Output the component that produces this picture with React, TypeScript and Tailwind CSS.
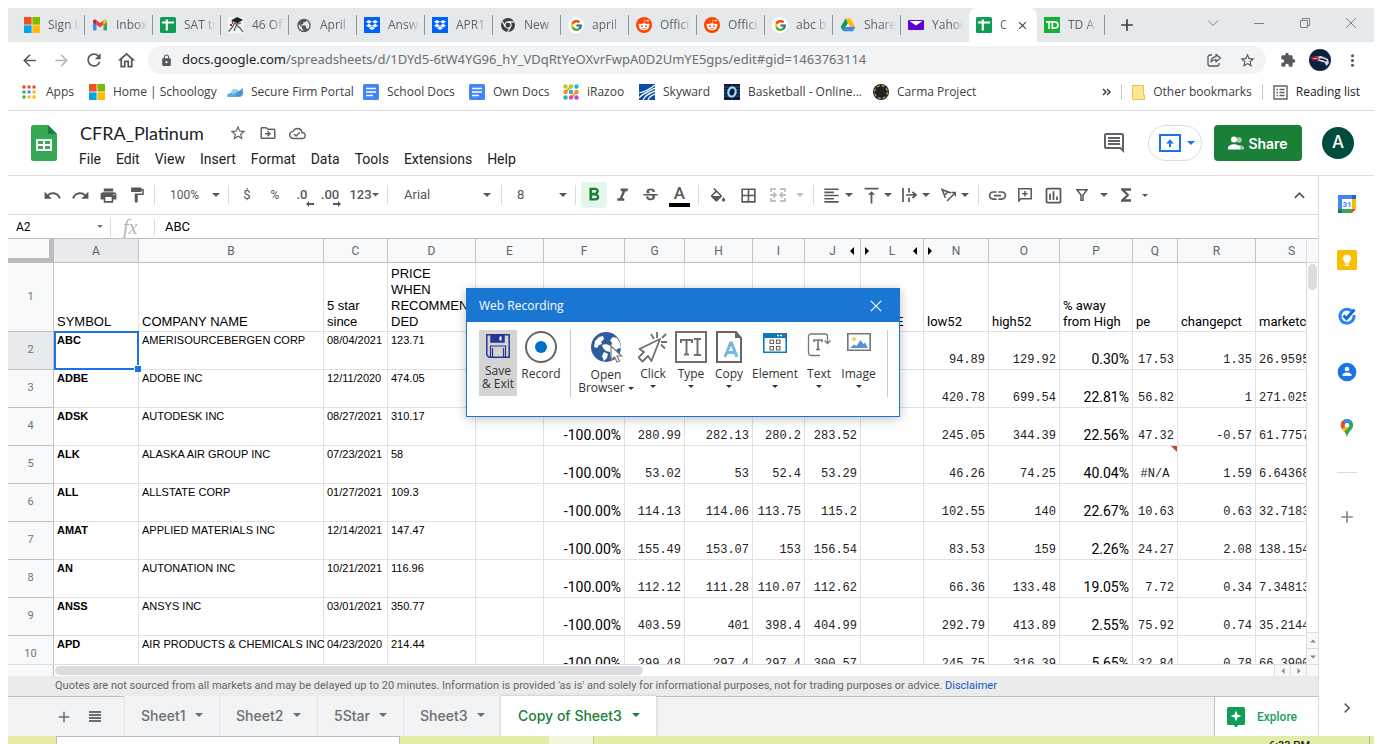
import type { ReactNode } from 'react';
import { FcGoogle } from 'react-icons/fc';
import { FaRedditAlien, FaDropbox } from 'react-icons/fa';
import {
  MdAdd, MdArrowBack, MdArrowForward, MdBorderAll, MdClose, MdExtension, MdFormatAlignLeft,
  MdFormatBold, MdFormatItalic, MdFormatPaint, MdFunctions, MdInsertLink,
  MdKeyboardArrowRight, MdKeyboardArrowUp, MdLock, MdMoreVert, MdOutlineCloudDone,
  MdOutlineDriveFileMove, MdOutlineHome, MdOutlineInsertChart, MdPrint, MdRedo, MdRefresh,
  MdOutlineComment, MdStarBorder, MdStrikethroughS, MdUndo, MdVerticalAlignTop, MdPublic,
} from 'react-icons/md';

const UI = "font-['Open_Sans','Noto_Sans',sans-serif]";

function Caret({ className = 'w-2' }: { className?: string }) {
  return (
    <svg viewBox="0 0 8 4" className={`${className} shrink-0 fill-current`} aria-hidden="true">
      <path d="M0 0h8L4 4z" />
    </svg>
  );
}

/* ---------- site icons ---------- */

function Microsoft() {
  return (
    <svg viewBox="0 0 16 16" className="size-4">
      <path fill="#f25022" d="M0 0h7.6v7.6H0z" /><path fill="#7fba00" d="M8.4 0H16v7.6H8.4z" />
      <path fill="#00a4ef" d="M0 8.4h7.6V16H0z" /><path fill="#ffb900" d="M8.4 8.4H16V16H8.4z" />
    </svg>
  );
}
function Gmail() {
  return (
    <svg viewBox="0 0 16 16" className="size-4">
      <path fill="#4285f4" d="M1 4v8.5c0 .6.4 1 1 1h2.5V7z" />
      <path fill="#34a853" d="M15 4v8.5c0 .6-.4 1-1 1h-2.500V7z" />
      <path fill="#ea4335" d="M4.500 3.200 8 6l3.500-2.800v4.600L8 10.500 4.500 7.800z" />
      <path fill="#c5221f" d="M1 4.200C1 2.700 2.700 2 3.800 2.700l.7.5v4.600L1 5.300z" />
      <path fill="#fbbc04" d="M15 4.200c0-1.500-1.700-2.200-2.800-1.500l-.7.500v4.600L15 5.300z" />
    </svg>
  );
}
function SheetsSquare() {
  return (
    <svg viewBox="0 0 16 16" className="size-4">
      <rect width="16" height="16" rx="1.500" fill="#0f9d58" />
      <path fill="#fff" d="M2 4.500h3.700V2.500h2.200v2H14v2H7.900V13.500H5.700v-7H2z" />
    </svg>
  );
}
function Graduate() {
  return (
    <svg viewBox="0 0 16 16" className="size-4">
      <rect width="16" height="16" fill="#f5f5f5" />
      <path fill="#222" d="m3 3.500 6-3.500 6 2.800-5.500 3.700z" />
      <path d="M4.500 4v3M6 6c2 1.500 4 1.500 7 0M6 7c-1 3-3 5-5.500 7.500M8 8l4 3 3 4M8 9l-2 5" stroke="#555" strokeWidth="1.200" fill="none" />
      <path d="M2 8h2" stroke="#b71c3c" strokeWidth="2" />
    </svg>
  );
}
function Dropbox() {
  return <span className="flex size-4 items-center justify-center bg-[#0061fe] text-white"><FaDropbox size={12} /></span>;
}
function ChromeGray() {
  return (
    <svg viewBox="0 0 16 16" className="size-4">
      <circle cx="8" cy="8" r="7" fill="#3c4043" />
      <circle cx="8" cy="8" r="3.100" fill="none" stroke="#fff" strokeWidth="1.100" />
      <path d="M8 4.900h6.200M5.300 9.600 2.200 4.300M10.700 9.600l-3 5.300" stroke="#fff" strokeWidth="1.100" />
    </svg>
  );
}
function Google() {
  return <span className="flex size-4 items-center justify-center rounded-full bg-white"><FcGoogle size={13} /></span>;
}
function Reddit() {
  return <span className="flex size-4 items-center justify-center rounded-full bg-[#ff4500] text-white"><FaRedditAlien size={12} /></span>;
}
function Drive() {
  return (
    <svg viewBox="0 0 16 16" className="size-4">
      <path fill="#0f9d58" d="M5.500 1.500 8 5.800 3.200 14.300.6 10z" />
      <path fill="#ffba00" d="M5.500 1.500h5L15.400 10h-5z" />
      <path fill="#4285f4" d="M5.700 10h9.700l-2.500 4.300H3.200z" />
    </svg>
  );
}
function Yahoo() {
  return (
    <svg viewBox="0 0 16 16" className="size-4">
      <rect y="3" width="16" height="10" rx="1" fill="#6001d2" />
      <path d="M1.500 4h13L8 8.500z" fill="#fff" />
    </svg>
  );
}
function TD() {
  return (
    <svg viewBox="0 0 16 16" className="size-4">
      <rect width="16" height="16" fill="#14b135" />
      <path d="M2 4.800h6M5 4.800v7.200M8.300 4.800H10c2.500 0 4 1.200 4 3.200s-1.500 3.200-4 3.200H8.300z" stroke="#fff" strokeWidth="1.700" fill="none" />
    </svg>
  );
}
function AppsGrid() {
  const c = ['#ea4335', '#ea4335', '#ea4335', '#34a853', '#4285f4', '#fbbc04', '#34a853', '#fbbc04', '#fbbc04'];
  return (
    <svg viewBox="0 0 14 14" className="size-3.5">
      {c.map((f, i) => <rect key={i} x={(i % 3) * 5 + 0.5} y={Math.floor(i / 3) * 5 + 0.5} width="3" height="3" fill={f} />)}
    </svg>
  );
}
function CloudBlue() {
  return (
    <svg viewBox="0 0 16 16" className="size-4">
      <path fill="#5aa9e0" d="M0 12c0-2 2-3 4-3 0-2 2-4 4-4 1.500 0 3 .8 3.500 2L16 4v6c0 2-2 3-4 3H2c-1 0-2 0-2-1z" />
      <path fill="#9fd0f2" d="M4 9c0-2 2-4 4-4 1.500 0 3 .8 3.500 2L6 10z" />
      <path d="m9 12 5-5m-2 5 4-4" stroke="#1e6fb4" strokeWidth="1" />
    </svg>
  );
}
function DocsBlue() {
  return (
    <svg viewBox="0 0 16 16" className="size-4">
      <rect width="16" height="16" rx="1.500" fill="#4285f4" />
      <path d="M3 4.500h10M3 8h10M3 11.500h7" stroke="#fff" strokeWidth="1.600" />
    </svg>
  );
}
function Razoo() {
  return (
    <svg viewBox="0 0 16 16" className="size-4">
      <path d="M2.500 8 8 2.500M8 13.500l5.500-5.500" stroke="#ff9b21" strokeWidth="2" />
      <g fill="#1fb5d6"><circle cx="13.500" cy="2.500" r="2.200" /><circle cx="8" cy="8" r="2.300" /><circle cx="2.500" cy="13.500" r="2.200" /></g>
      <g fill="#a8cf38"><circle cx="2.500" cy="2.500" r="2.200" /><circle cx="8" cy="2.500" r="2.200" /></g>
      <g fill="#ff8a1f"><circle cx="2.500" cy="8" r="2.200" /><circle cx="13.500" cy="8" r="2.200" /></g>
      <circle cx="8" cy="13.500" r="2.200" fill="#e8489a" /><circle cx="13.500" cy="13.500" r="2.200" fill="#b04fc7" />
    </svg>
  );
}
function Skyward() {
  return (
    <svg viewBox="0 0 16 16" className="size-4">
      <rect width="16" height="16" fill="#0b4ea2" />
      <path d="M0 9C5 8 11 5 16 1M0 14C4 9 11 7 16 4M4 16c2-5 7-7 12-9M9 16c1-3 4-5 7-6" stroke="#fff" strokeWidth="1.200" fill="none" />
    </svg>
  );
}
function Basketball() {
  return (
    <svg viewBox="0 0 16 16" className="size-4">
      <rect width="16" height="16" fill="#0b1d3a" />
      <path d="M0 3h16M0 6h16M0 9h16M0 12h16" stroke="#2b6f9e" strokeWidth=".8" />
      <ellipse cx="8" cy="8" rx="3.600" ry="4.600" transform="rotate(15 8 8)" fill="#0b1d3a" stroke="#9edcf5" strokeWidth="2.200" />
    </svg>
  );
}
function Carma() {
  return (
    <svg viewBox="0 0 16 16" className="size-4">
      <circle cx="8" cy="8" r="8" fill="#222" />
      <circle cx="8" cy="8" r="6.400" fill="none" stroke="#c9a24a" strokeWidth="1.200" strokeDasharray="3 2" />
    </svg>
  );
}

const tabs: { title: string; icon: ReactNode }[] = [
  { title: 'Sign in', icon: <Microsoft /> },
  { title: 'Inbox', icon: <Gmail /> },
  { title: 'SAT tu', icon: <SheetsSquare /> },
  { title: '46 Off', icon: <Graduate /> },
  { title: 'April', icon: <MdPublic size={17} className="text-[#55585c]" /> },
  { title: 'Answ', icon: <Dropbox /> },
  { title: 'APR1', icon: <Dropbox /> },
  { title: 'New', icon: <ChromeGray /> },
  { title: 'april', icon: <Google /> },
  { title: 'Offici', icon: <Reddit /> },
  { title: 'Offici', icon: <Reddit /> },
  { title: 'abc b', icon: <Google /> },
  { title: 'Share', icon: <Drive /> },
  { title: 'Yahoo', icon: <Yahoo /> },
];

function TabStrip() {
  const fade = 'overflow-hidden whitespace-nowrap [mask-image:linear-gradient(to_right,black_60%,transparent)]';
  return (
    <div className="flex h-[34px] items-center bg-[#e6e9ec] pl-[9px] text-[12px] text-[#5f6368]">
      {tabs.map((t, i) => (
        <a key={i} href="#" className={`flex h-5 w-[68px] shrink-0 items-center gap-2 pl-[7px] ${i < 13 ? 'border-r border-[#8f9296]' : ''}`}>
          <span className="flex w-4 shrink-0 justify-center">{t.icon}</span>
          <span className={`w-[32px] ${fade}`}>{t.title}</span>
        </a>
      ))}
      <div className="flex h-full w-[68px] shrink-0 items-center gap-2 rounded-t-lg bg-white pl-[7px]">
        <SheetsSquare />
        <span className={`w-2 ${fade}`}>C</span>
        <button aria-label="Close tab"><MdClose size={13} className="text-[#3c4043]" /></button>
      </div>
      <a href="#" className="flex h-5 w-[68px] shrink-0 items-center gap-2 border-r border-[#8f9296] pl-[7px]">
        <TD />
        <span className={`w-[30px] ${fade}`}>TD A</span>
      </a>
      <button aria-label="New tab" className="ml-3"><MdAdd size={20} className="text-[#3c4043]" /></button>
      <div className="ml-auto flex h-full items-center gap-[30px] pr-[17px] text-[#7d8185]">
        <button aria-label="Search tabs" className="pb-1">
          <svg viewBox="0 0 12 12" className="w-3" fill="none" stroke="currentColor"><path d="m1 3.500 5 5 5-5" /></svg>
        </button>
        <button aria-label="Minimize" className="pb-1 pl-1">
          <svg viewBox="0 0 12 12" className="w-3" fill="none" stroke="currentColor"><path d="M1 6.500h10" /></svg>
        </button>
        <button aria-label="Restore" className="pb-1 pl-1">
          <svg viewBox="0 0 12 12" className="w-3" fill="none" stroke="currentColor"><path d="M1.500 3.500h7v7h-7zM3.500 3V1.500h7v7H9" /></svg>
        </button>
        <button aria-label="Close" className="pb-1 pl-1">
          <svg viewBox="0 0 12 12" className="w-3" fill="none" stroke="currentColor"><path d="m1 1 10 10M11 1 1 11" /></svg>
        </button>
      </div>
    </div>
  );
}

function AddressBar() {
  return (
    <div className="flex h-9 items-center pr-3 pl-3 text-[#55585c]">
      <button aria-label="Back" className="flex w-8"><MdArrowBack size={19} /></button>
      <button aria-label="Forward" className="flex w-8 text-[#b4b7ba]"><MdArrowForward size={19} /></button>
      <button aria-label="Reload" className="flex w-8"><MdRefresh size={20} /></button>
      <button aria-label="Home" className="flex w-8"><MdOutlineHome size={21} /></button>
      <div className="flex h-7 grow items-center rounded-full bg-[#f1f3f4] pr-2.5 pl-3 font-['Noto_Sans',sans-serif] text-[13px]">
        <MdLock size={13} className="mr-[9px] shrink-0" />
        <label htmlFor="url" className="text-[#202124]">docs.google.com</label>
        <input id="url" className="min-w-0 grow bg-transparent text-[#6b6e72] outline-none" defaultValue="/spreadsheets/d/1DYd5-6tW4YG96_hY_VDqRtYeOXvrFwpA0D2UmYE5gps/edit#gid=1463763114" />
        <button aria-label="Share this page" className="mr-[17px]">
          <svg viewBox="0 0 16 16" className="w-4" fill="none" stroke="currentColor" strokeWidth="1.300">
            <path d="M6 3H4a2 2 0 0 0-2 2v7a2 2 0 0 0 2 2h7a2 2 0 0 0 2-2v-1" />
            <path d="M10 2.500 14.500 6 10 9.800V7.700c-2.500 0-4 .8-5 2.300.3-3 2-5 5-5.300z" strokeLinejoin="round" />
          </svg>
        </button>
        <button aria-label="Bookmark this page"><MdStarBorder size={17} /></button>
      </div>
      <button aria-label="Extensions" className="ml-[14px]"><MdExtension size={16} /></button>
      <button aria-label="Profile" className="ml-[13px]">
        <svg viewBox="0 0 22 22" className="w-[22px]">
          <circle cx="11" cy="11" r="11" fill="#0c2340" />
          <path d="M1 8.500 12 7l7 3 1 4-2.500 3-2-3.500-4-1z" fill="#d5d9de" />
          <path d="m1.500 8.800 8-.6M3.500 11l7-1" stroke="#c8102e" strokeWidth="1.600" />
          <path d="m11 10 3.500.5 3 1.500" stroke="#0c2340" strokeWidth="1.400" />
        </svg>
      </button>
      <button aria-label="Menu" className="ml-3"><MdMoreVert size={19} /></button>
    </div>
  );
}

const bookmarks: { label: string; icon: ReactNode; w: string }[] = [
  { label: 'Apps', icon: <AppsGrid />, w: 'w-[67px]' },
  { label: 'Home | Schoology', icon: <Microsoft />, w: 'w-[138px]' },
  { label: 'Secure Firm Portal', icon: <CloudBlue />, w: 'w-[136px]' },
  { label: 'School Docs', icon: <DocsBlue />, w: 'w-[106px]' },
  { label: 'Own Docs', icon: <DocsBlue />, w: 'w-[94px]' },
  { label: 'iRazoo', icon: <Razoo />, w: 'w-[76px]' },
  { label: 'Skyward', icon: <Skyward />, w: 'w-[85px]' },
  { label: 'Basketball - Online...', icon: <Basketball />, w: 'w-[149px]' },
  { label: 'Carma Project', icon: <Carma />, w: 'w-[110px]' },
];

function Bookmarks() {
  return (
    <nav className="flex h-[33px] items-center border-b border-[#dadce0] pr-3.5 pb-1 pl-3.5 text-[12px] whitespace-nowrap text-[#3c4043]">
      {bookmarks.map((b) => (
        <a key={b.label} href="#" className={`flex shrink-0 items-center gap-2 ${b.w}`}>
          <span className="flex w-4 shrink-0">{b.icon}</span>
          {b.label}
        </a>
      ))}
      <button aria-label="More bookmarks" className="ml-auto">
        <svg viewBox="0 0 9 8" className="w-[9px]" fill="none" stroke="currentColor" strokeWidth="1.500"><path d="m1 1 3 3-3 3M5 1l3 3-3 3" /></svg>
      </button>
      <span className="mx-2.5 h-4 w-px bg-[#c8cacd]" />
      <a href="#" className="flex items-center gap-2">
        <svg viewBox="0 0 13 15" className="w-[13px]"><path d="M.5.500h11v9.500h1v4.500H.500z" fill="#ffe694" stroke="#e8c547" /></svg>
        Other bookmarks
      </a>
      <span className="mx-2.5 h-4 w-px bg-[#c8cacd]" />
      <button className="flex items-center gap-2 text-[#202124]">
        <svg viewBox="0 0 15 15" className="w-[15px]" fill="none" stroke="#5f6368" strokeWidth="1.400">
          <path d="M1 1h13v13H1zM3.500 4.500H5M6.500 4.500h5M3.500 7.500H5M6.500 7.500h5M3.500 10.500H5M6.500 10.500h5" />
        </svg>
        Reading list
      </button>
    </nav>
  );
}

/* ---------- document header ---------- */

const menus = ['File', 'Edit', 'View', 'Insert', 'Format', 'Data', 'Tools', 'Extensions', 'Help'];

function DocHeader() {
  return (
    <header className="flex h-[65px] items-center border-b border-[#dadce0] pr-5 pl-[23px]">
      <svg viewBox="0 0 26 36" className="w-[26px]">
        <path d="M2.500 0H17l9 9v24.500a2.500 2.500 0 0 1-2.500 2.500h-21A2.500 2.500 0 0 1 0 33.500v-31A2.500 2.500 0 0 1 2.500 0z" fill="#34a853" />
        <path d="M17 0l9 9h-9z" fill="#188038" />
        <path d="M5 14h16v12H5zM7 16v3h5v-3zm7 0v3h5v-3zm-7 5v3h5v-3zm7 0v3h5v-3z" fill="#fff" fillRule="evenodd" />
      </svg>
      <div className="ml-[22px] pt-1">
        <div className="flex h-7 items-center text-[#5f6368]">
          <h1 className="w-[150px] pl-px font-['Lato',sans-serif] text-[18px] text-[#202124]">CFRA_Platinum</h1>
          <button aria-label="Star" className="w-[30px]"><MdStarBorder size={18} /></button>
          <button aria-label="Move" className="w-[30px]"><MdOutlineDriveFileMove size={18} /></button>
          <button aria-label="Document status"><MdOutlineCloudDone size={17} /></button>
        </div>
        <nav className="flex h-6 items-center gap-[15px] text-[14px] text-[#202124]">
          {menus.map((m) => <button key={m}>{m}</button>)}
        </nav>
      </div>
      <button aria-label="Comments" className="ml-auto text-[#5f6368]"><MdOutlineComment size={24} /></button>
      <button aria-label="Present" className="ml-[22px] flex h-9 w-[54px] items-center justify-center gap-1.5 rounded-full border border-[#dadce0] pl-1 text-[#1a73e8]">
        <svg viewBox="0 0 22 18" className="w-[22px]" fill="none" stroke="currentColor" strokeWidth="2">
          <path d="M1 1h20v16H1zM11 13V6.500" /><path d="m7 9.500 4-4.200 4 4.200z" fill="currentColor" stroke="none" />
        </svg>
        <Caret />
      </button>
      <button className="ml-3 flex h-9 w-[88px] items-center justify-center gap-1 rounded bg-[#1a8038] font-['Inter',sans-serif] text-[14px] font-semibold text-white">
        <svg viewBox="0 0 16 14" className="w-4" fill="#fff">
          <circle cx="11" cy="4" r="2.700" opacity=".6" /><path d="M10 9c3 0 6 1 6 3v1.500h-4z" opacity=".6" />
          <circle cx="6" cy="3.500" r="3" /><path d="M0 13.500V12c0-2.500 3.500-3.700 6-3.700S12 9.500 12 12v1.500z" />
        </svg>
        Share
      </button>
      <button className="ml-5 size-8 rounded-full bg-[#004d40] font-['Inter',sans-serif] text-[17px] font-medium text-white" aria-label="Account">A</button>
    </header>
  );
}

function Sep() {
  return <span className="flex w-[7px] shrink-0 justify-center"><span className="h-5 w-px bg-[#dadce0]" /></span>;
}
function Tool({ w, label, children }: { w: string; label: string; children: ReactNode }) {
  return <button aria-label={label} className={`flex h-7 shrink-0 items-center ${w}`}>{children}</button>;
}

function Toolbar() {
  return (
    <div className="flex h-[39px] shrink-0 items-center border-b border-[#dadce0] pl-[30px] text-[13px] text-[#55585c]">
      <Tool label="Undo" w="w-7 justify-center"><MdUndo size={19} /></Tool>
      <Tool label="Redo" w="w-7 justify-center"><MdRedo size={19} /></Tool>
      <Tool label="Print" w="w-7 justify-center"><MdPrint size={19} /></Tool>
      <Tool label="Paint format" w="w-[29px] justify-center"><MdFormatPaint size={18} /></Tool>
      <Sep />
      <div className="flex w-[67px] shrink-0 items-center pr-[5px] pl-3 text-[12px]">
        <select aria-label="Zoom" className="grow appearance-none bg-transparent"><option>100%</option></select>
        <Caret />
      </div>
      <Sep />
      <Tool label="Currency" w="w-[30px] justify-center">$</Tool>
      <Tool label="Percent" w="w-[26px] justify-center text-[12px]">%</Tool>
      <Tool label="Decrease decimal places" w="w-7 justify-center font-medium">
        <span className="relative">.0<svg viewBox="0 0 8 6" className="absolute -right-1.5 -bottom-0.5 w-2" fill="currentColor"><path d="M3 0v2h5v2H3v2L0 3z" /></svg></span>
      </Tool>
      <Tool label="Increase decimal places" w="w-7 justify-center font-medium">
        <span className="relative">.00<svg viewBox="0 0 8 6" className="absolute -right-0.5 -bottom-0.5 w-2" fill="currentColor"><path d="M5 0v2H0v2h5v2l3-3z" /></svg></span>
      </Tool>
      <Tool label="More formats" w="w-10 justify-center font-medium">123<Caret className="w-[7px]" /></Tool>
      <Sep />
      <div className="flex w-[107px] shrink-0 items-center pr-[7px] pl-[13px]">
        <select aria-label="Font" className="grow appearance-none bg-transparent"><option>Arial</option></select>
        <Caret />
      </div>
      <Sep />
      <div className="flex w-[67px] shrink-0 items-center pr-[5px] pl-3">
        <select aria-label="Font size" className="grow appearance-none bg-transparent"><option>8</option></select>
        <Caret />
      </div>
      <Sep />
      <Tool label="Bold" w="w-[30px] justify-center">
        <span className="flex size-[26px] items-center justify-center rounded-sm bg-[#e6f4ea] text-[#188038]"><MdFormatBold size={22} /></span>
      </Tool>
      <Tool label="Italic" w="w-[27px] justify-center"><MdFormatItalic size={21} /></Tool>
      <Tool label="Strikethrough" w="w-7 justify-center"><MdStrikethroughS size={19} /></Tool>
      <Tool label="Text color" w="w-[31px] justify-center">
        <span className="flex w-[21px] flex-col items-center border-b-4 border-black text-[17px] leading-5 font-medium">A</span>
      </Tool>
      <Sep />
      <Tool label="Fill color" w="w-8 justify-center">
        <svg viewBox="2 0 20 18" className="w-4" fill="currentColor">
          <path d="M16.560 8.940 7.620 0 6.210 1.410l2.380 2.380-5.150 5.150c-.59.59-.59 1.540 0 2.120l5.500 5.500c.29.29.68.44 1.060.44s.77-.15 1.060-.44l5.500-5.500c.59-.58.59-1.530 0-2.120zM5.210 10 10 5.210 14.790 10H5.210zM19 11.500s-2 2.170-2 3.500c0 1.100.9 2 2 2s2-.9 2-2c0-1.330-2-3.500-2-3.500z" />
        </svg>
      </Tool>
      <Tool label="Borders" w="w-7 justify-center"><MdBorderAll size={19} /></Tool>
      <Tool label="Merge cells" w="w-12 gap-2.5 pl-2 text-[#bdc1c6]">
        <svg viewBox="0 0 16 14" className="w-4" fill="none" stroke="currentColor" strokeWidth="1.800">
          <path d="M1 4V1h5M10 1h5v3M1 10v3h5M10 13h5v-3M0 7h5M16 7h-5M3.500 4.500 6 7 3.500 9.500M12.500 4.500 10 7l2.500 2.500" />
        </svg>
        <Caret />
      </Tool>
      <Sep />
      <Tool label="Horizontal align" w="w-[38px] gap-1 pl-[5px]"><MdFormatAlignLeft size={19} /><Caret /></Tool>
      <Tool label="Vertical align" w="w-10 gap-0.5 pl-1.5"><MdVerticalAlignTop size={21} /><Caret /></Tool>
      <Tool label="Text wrapping" w="w-[38px] gap-[5px] pl-[7px]">
        <svg viewBox="0 0 15 14" className="w-[15px]" fill="none" stroke="currentColor" strokeWidth="1.700">
          <path d="M1 0v14M7 0v4.500M7 9.500V14M4 7h9M10.500 4 14 7l-3.500 3" />
        </svg>
        <Caret />
      </Tool>
      <Tool label="Text rotation" w="w-[42px] gap-[5px] pl-2">
        <svg viewBox="0 0 15 14" className="w-[15px]" fill="none" stroke="currentColor" strokeWidth="1.500">
          <path d="M1 1.500 10 5M1 1.500 4.500 10M1 1.500l6 2.500-3.500 3zM6 13l8-8M10.500 4.500h4v4" />
        </svg>
        <Caret />
      </Tool>
      <Sep />
      <Tool label="Insert link" w="w-[30px] justify-center"><MdInsertLink size={21} /></Tool>
      <Tool label="Insert comment" w="w-[26px] justify-center">
        <svg viewBox="0 0 14 14" className="w-3.5" fill="none" stroke="currentColor" strokeWidth="1.500"><path d="M.8.800h12.400v10H3L.8 13zM7 3v5.500M4.200 5.800h5.600" /></svg>
      </Tool>
      <Tool label="Insert chart" w="w-[30px] justify-center"><MdOutlineInsertChart size={21} /></Tool>
      <Tool label="Filter" w="w-[43px] gap-3 pl-2">
        <svg viewBox="0 0 12 12" className="w-3" fill="none" stroke="currentColor" strokeWidth="1.500"><path d="M1 .8h10L7 6v5.500H5V6z" /></svg>
        <Caret />
      </Tool>
      <Tool label="Functions" w="w-[39px] gap-1.5 pl-[5px]"><MdFunctions size={20} /><Caret className="w-1.5" /></Tool>
      <button aria-label="Hide menus" className="mr-2 ml-auto"><MdKeyboardArrowUp size={21} /></button>
    </div>
  );
}

function FormulaBar() {
  return (
    <div className="flex h-[23px] shrink-0 items-center text-[13px] text-black">
      <input aria-label="Name box" defaultValue="A2" className="w-[89px] bg-transparent pl-2 text-[12px] outline-none" />
      <Caret className="w-1.5 text-[#777]" />
      <span className="mr-3 ml-[7px] h-5 w-px bg-[#dadce0]" />
      <label htmlFor="formula" className="w-[31px] font-['Liberation_Serif',serif] text-[20px] leading-5 text-[#b5b5b5] italic">fx</label>
      <span className="mr-2.5 h-4 w-px bg-[#dadce0]" />
      <input id="formula" defaultValue="ABC" className="grow bg-transparent text-[13px] outline-none" />
    </div>
  );
}

/* ---------- grid ---------- */

const columns: { id: string; w: string; before?: boolean; after?: boolean }[] = [
  { id: 'A', w: 'w-[85px]' }, { id: 'B', w: 'w-[185px]' }, { id: 'C', w: 'w-[64px]' },
  { id: 'D', w: 'w-[88px]' }, { id: 'E', w: 'w-[68px]' }, { id: 'F', w: 'w-[81px]' },
  { id: 'G', w: 'w-[60px]' }, { id: 'H', w: 'w-[68px]' }, { id: 'I', w: 'w-[52px]' },
  { id: 'J', w: 'w-[56px]', after: true }, { id: 'L', w: 'w-[63px]', before: true, after: true },
  { id: 'N', w: 'w-[65px]', before: true }, { id: 'O', w: 'w-[71px]' }, { id: 'P', w: 'w-[73px]' },
  { id: 'Q', w: 'w-[45px]' }, { id: 'R', w: 'w-[78px]' }, { id: 'S', w: 'w-[72px]' },
];

const headings = ['SYMBOL', 'COMPANY NAME', '5 star since', 'PRICE WHEN RECOMMENDED', '', '', '', '', '', '', 'PRICE', 'low52', 'high52', '% away from High', 'pe', 'changepct', 'marketcap'];

const rows: string[][] = [
  ['ABC', 'AMERISOURCEBERGEN CORP', '08/04/2021', '123.71', '', '', '', '', '', '', '', '94.89', '129.92', '0.30%', '17.53', '1.35', '26.9595'],
  ['ADBE', 'ADOBE INC', '12/11/2020', '474.05', '', '', '', '', '', '', '', '420.78', '699.54', '22.81%', '56.82', '1', '271.025'],
  ['ADSK', 'AUTODESK INC', '08/27/2021', '310.17', '', '-100.00%', '280.99', '282.13', '280.2', '283.52', '', '245.05', '344.39', '22.56%', '47.32', '-0.57', '61.7757'],
  ['ALK', 'ALASKA AIR GROUP INC', '07/23/2021', '58', '', '-100.00%', '53.02', '53', '52.4', '53.29', '', '46.26', '74.25', '40.04%', '#N/A', '1.59', '6.64368'],
  ['ALL', 'ALLSTATE CORP', '01/27/2021', '109.3', '', '-100.00%', '114.13', '114.06', '113.75', '115.2', '', '102.55', '140', '22.67%', '10.63', '0.63', '32.7183'],
  ['AMAT', 'APPLIED MATERIALS INC', '12/14/2021', '147.47', '', '-100.00%', '155.49', '153.07', '153', '156.54', '', '83.53', '159', '2.26%', '24.27', '2.08', '138.154'],
  ['AN', 'AUTONATION INC', '10/21/2021', '116.96', '', '-100.00%', '112.12', '111.28', '110.07', '112.62', '', '66.36', '133.48', '19.05%', '7.72', '0.34', '7.34813'],
  ['ANSS', 'ANSYS INC', '03/01/2021', '350.77', '', '-100.00%', '403.59', '401', '398.4', '404.99', '', '292.79', '413.89', '2.55%', '75.92', '0.74', '35.2144'],
  ['APD', 'AIR PRODUCTS & CHEMICALS INC', '04/23/2020', '214.44', '', '-100.00%', '299.48', '297.4', '297.4', '300.57', '', '245.75', '316.39', '5.65%', '32.84', '0.78', '66.3900'],
];

function cellStyle(col: number, value: string) {
  if (col < 4) return `align-top pt-[2px] text-[11px] leading-[13px] font-['Liberation_Sans',sans-serif] ${col === 0 ? 'font-bold' : ''}`;
  if (col === 5 || col === 13) return 'align-bottom pb-[2px] text-right text-[14px] leading-4';
  const align = col === 16 ? 'text-left' : value === '#N/A' ? 'text-center' : 'text-right';
  return `align-bottom pb-[1px] text-[12px] leading-4 font-['Liberation_Mono',monospace] text-[#222] ${align}`;
}

function Grid() {
  return (
    <table className="w-[1320px] shrink-0 table-fixed border-separate border-spacing-0 text-black">
      <thead>
        <tr className="text-[12px] font-normal text-[#5f6368]">
          <td className="h-6 w-[46px] border-r-[5px] border-b-[5px] border-[#bcbcbc] bg-[#f8f9fa]" />
          {columns.map((c) => (
            <th key={c.id} className={`h-6 border-r border-b border-[#c0c0c0] p-0 font-normal ${c.w} ${c.id === 'A' ? 'bg-[#e8eaed]' : 'bg-[#f8f9fa]'}`}>
              <span className="flex items-center justify-between px-1 text-black">
                <span className="w-1.5">{c.before && <svg viewBox="0 0 4 8" className="w-1"><path d="m0 0 4 4-4 4z" /></svg>}</span>
                <span className="text-[#5f6368]">{c.id}</span>
                <span className="w-1.5">{c.after && <svg viewBox="0 0 4 8" className="w-1"><path d="M4 0 0 4l4 4z" /></svg>}</span>
              </span>
            </th>
          ))}
        </tr>
      </thead>
      <tbody>
        <tr>
          <th className="h-[69px] border-r border-b border-[#c0c0c0] bg-[#f8f9fa] p-0 text-[11px] font-normal text-[#6f7377]">1</th>
          {headings.map((h, i) => (
            <td key={i} className={`h-[69px] border-r border-b border-[#e1e1e1] px-[3px] pt-0 pb-[1px] align-bottom text-[13px] leading-4 break-words ${i < 11 ? "font-['Liberation_Sans',sans-serif]" : ''}`}>{h}</td>
          ))}
        </tr>
        {rows.map((r, n) => (
          <tr key={r[0]}>
            <th className={`h-[38px] border-r border-b border-[#c0c0c0] p-0 text-[11px] font-normal text-[#6f7377] ${n === 0 ? 'bg-[#e8eaed]' : 'bg-[#f8f9fa]'}`}>{n + 2}</th>
            {r.map((v, i) => (
              <td key={i} className={`relative h-[38px] border-r border-b border-[#e1e1e1] px-[3px] py-0 whitespace-nowrap ${cellStyle(i, v)}`}>
                {v}
                {v === '#N/A' && <svg viewBox="0 0 6 6" className="absolute top-0 right-0 w-1.5"><path d="M0 0h6v6z" fill="#d23f31" /></svg>}
                {n === 0 && i === 0 && (
                  <span className="absolute -top-px -right-px -bottom-px left-0 z-10 border-2 border-[#1a73e8]">
                    <span className="absolute -right-1 -bottom-1 size-[7px] border-t border-l border-white bg-[#1a73e8]" />
                  </span>
                )}
              </td>
            ))}
          </tr>
        ))}
      </tbody>
    </table>
  );
}

function Arrow({ d, label, className }: { d: string; label: string; className: string }) {
  return (
    <button aria-label={label} className={`flex shrink-0 items-center justify-center border-[#dadce0] bg-[#f8f9fa] ${className}`}>
      <svg viewBox="0 0 6 6" className="w-1.5" fill="#888"><path d={d} /></svg>
    </button>
  );
}

function Sheet() {
  return (
    <>
      <div className="flex min-h-0 grow overflow-hidden border-t border-b border-t-[#c0c0c0] border-b-[#dadce0]">
        <div className="min-w-0 grow overflow-hidden"><Grid /></div>
        <div className="flex w-3 shrink-0 flex-col border-l border-[#dadce0]">
          <div className="h-6 border-b border-[#dadce0] bg-[#f8f9fa]" />
          <div className="mx-px mt-px h-[26px] rounded-full bg-[#dadce0]" />
          <Arrow label="Scroll up" d="M3 1.500 6 4.500H0z" className="mt-auto h-4 border-t" />
          <Arrow label="Scroll down" d="M0 1.500h6L3 4.500z" className="h-4 border-t" />
        </div>
      </div>
      <div className="flex h-[11px] shrink-0">
        <div className="w-[46px] border-r border-[#c0c0c0] bg-[#f8f9fa]" />
        <div className="my-px ml-px w-[588px] rounded-full bg-[#dadce0]" />
        <Arrow label="Scroll left" d="M4.500 0v6l-3-3z" className="ml-auto w-4 border-l" />
        <Arrow label="Scroll right" d="M1.500 0v6l3-3z" className="w-4 border-l" />
        <div className="w-3 border-l border-[#dadce0] bg-[#f8f9fa]" />
      </div>
      <div className="h-5 shrink-0 bg-[#ebebeb] pl-[47px] text-[11px] leading-5 text-[#666]">
        Quotes are not sourced from all markets and may be delayed up to 20 minutes. Information is provided 'as is' and solely for informational purposes, not for trading purposes or advice.{' '}
        <a href="#" className="text-[#1155cc]">Disclaimer</a>
      </div>
    </>
  );
}

const sheetTabs = [
  { name: 'Sheet1', w: 'w-[95px]' }, { name: 'Sheet2', w: 'w-[98px]' },
  { name: '5Star', w: 'w-[86px]' }, { name: 'Sheet3', w: 'w-[98px]' },
];

function SheetTabs() {
  return (
    <div className="flex h-10 shrink-0 bg-[#f1f3f4] font-['Inter',sans-serif] text-[14px] font-medium text-[#6a6e73]">
      <div className="flex w-[116px] items-center gap-4 border-t border-[#c0c0c0] pl-[47px]">
        <button aria-label="Add sheet"><MdAdd size={18} /></button>
        <button aria-label="All sheets">
          <svg viewBox="0 0 12 11" className="w-3" stroke="currentColor" strokeWidth="1.800"><path d="M0 1h12M0 4h12M0 7h12M0 10h12" /></svg>
        </button>
      </div>
      {sheetTabs.map((s) => (
        <button key={s.name} className={`flex shrink-0 items-center justify-between border-l border-[#e3e5e8] pr-4 pb-0.5 pl-4 ${s.w}`}>
          {s.name}<Caret />
        </button>
      ))}
      <button className="flex w-[155px] shrink-0 items-center justify-between bg-white pr-4 pb-0.5 pl-[17px] text-[#188038] shadow-[0_0_3px_#bbb]">
        Copy of Sheet3<Caret />
      </button>
      <div className="grow border-t border-[#c0c0c0]" />
      <button className="flex w-[104px] shrink-0 items-center gap-3 border-t border-l border-[#c0c0c0] bg-[#fdfefe] pl-3 font-['Roboto',sans-serif] text-[12px] text-[#1c9c5b]">
        <svg viewBox="0 0 18 20" className="w-[18px]">
          <path d="M1.500 0h15A1.500 1.500 0 0 1 18 1.500v15a1.500 1.500 0 0 1-1.500 1.500h-5L9 20.500 6.500 18h-5A1.500 1.500 0 0 1 0 16.500v-15A1.500 1.500 0 0 1 1.500 0z" fill="#0f9d58" />
          <path d="m9 3.500 1.500 4L14.500 9l-4 1.500-1.500 4-1.500-4L3.500 9l4-1.500z" fill="#fff" />
        </svg>
        Explore
      </button>
    </div>
  );
}

function SidePanel() {
  return (
    <aside className="flex w-14 shrink-0 flex-col items-center border-l border-[#dadce0] text-[#5f6368]">
      <button aria-label="Calendar" className="h-14">
        <svg viewBox="0 0 20 20" className="w-5">
          <path d="M1 1h14v4H5v10H1z" fill="#4285f4" /><path d="M15 1h4v4h-4z" fill="#1967d2" /><path d="M15 5h4v10h-4z" fill="#fbbc04" />
          <path d="M5 15h10v4H5z" fill="#34a853" /><path d="M1 15h4v4H1z" fill="#188038" /><path d="M15 15h4l-4 4z" fill="#ea4335" /><path d="M5 5h10v10H5z" fill="#fff" />
          <text x="10" y="13" textAnchor="middle" fontSize="8" fontWeight="700" fontFamily="Roboto" fill="#4285f4">31</text>
        </svg>
      </button>
      <button aria-label="Keep" className="h-14">
        <svg viewBox="0 0 20 20" className="w-5">
          <rect width="20" height="20" rx="1.500" fill="#fbbc04" />
          <path d="M10 4.500a4 4 0 0 0-2.300 7.300v1.700h4.600v-1.700A4 4 0 0 0 10 4.500zM8 14.500h4V16H8z" fill="#fff" />
        </svg>
      </button>
      <button aria-label="Tasks" className="h-14">
        <svg viewBox="0 0 20 20" className="w-5" fill="none">
          <path d="M14.500 4.800A7 7 0 1 0 16.900 9" stroke="#2684fc" strokeWidth="3" />
          <path d="m6.500 9.500 3 3L17.500 3.500" stroke="#1a66d8" strokeWidth="3" />
        </svg>
      </button>
      <button aria-label="Contacts" className="h-14">
        <svg viewBox="0 0 20 20" className="w-5">
          <circle cx="10" cy="10" r="9.300" fill="#1a73e8" /><circle cx="10" cy="7" r="2.300" fill="#fff" /><path d="M5.500 14v-1c0-1.800 3-2.500 4.500-2.500s4.500.700 4.500 2.500v1z" fill="#fff" />
        </svg>
      </button>
      <button aria-label="Maps" className="h-14">
        <svg viewBox="0 0 20 20" className="w-5">
          <clipPath id="pin"><path d="M10 1a6.200 6.200 0 0 0-6.200 6.200c0 4 4.700 5.800 6.200 11.800 1.500-6 6.200-7.800 6.200-11.800A6.200 6.200 0 0 0 10 1z" /></clipPath>
          <g clipPath="url(#pin)">
            <path d="M0 0h20v20H0z" fill="#34a853" /><path d="M4 0h14L10 7.500z" fill="#4285f4" /><path d="m3 12 7-7 1 5-5 5z" fill="#fbbc04" /><path d="m4 1.500 6 5.500-5 4-3-2z" fill="#ea4335" />
          </g>
          <circle cx="10" cy="7.200" r="2.300" fill="#fff" />
        </svg>
      </button>
      <span className="mt-4 h-px w-5 shrink-0 bg-[#dadce0]" />
      <button aria-label="Get add-ons" className="mt-[34px] text-[#80868b]"><MdAdd size={20} /></button>
      <button aria-label="Hide side panel" className="mt-auto mb-[18px]"><MdKeyboardArrowRight size={20} /></button>
    </aside>
  );
}

/* ---------- recorder dialog ---------- */

function Action({ w, label, menu, children }: { w: string; label: string; menu?: boolean; children: ReactNode }) {
  return (
    <button className={`flex shrink-0 flex-col items-center ${w}`}>
      <span className="flex h-[34px] items-center">{children}</span>
      <span className="mt-0.5 leading-4">{label}</span>
      {menu && <Caret className="mt-[3px] w-1.5" />}
    </button>
  );
}

function Recorder() {
  return (
    <section className={`absolute top-[288px] left-[466px] z-20 h-[129px] w-[434px] border border-[#1976d2] bg-white shadow-[0_2px_10px_rgba(0,0,0,0.25)] ${UI}`}>
      <div className="flex h-[33px] items-center justify-between bg-[#1976d2] pr-[17px] pl-3 text-[12px] text-white">
        <h2>Web Recording</h2>
        <button aria-label="Close recorder">
          <svg viewBox="0 0 12 12" className="w-3" fill="none" stroke="currentColor" strokeWidth="1.200"><path d="m.8.800 10.400 10.400M11.200.800.8 11.200" /></svg>
        </button>
      </div>
      <div className="flex items-start pt-2 pl-3 text-[12px] text-[#333] [&>span]:h-[67px] [&>span]:w-px [&>span]:bg-[#c8c8c8]">
        <button className="flex h-[66px] w-[38px] shrink-0 flex-col items-center bg-[#d4d4d4] pt-1 leading-[13px]">
          <svg viewBox="0 0 24 24" className="mb-1.5 w-6" fill="none" stroke="#283593" strokeWidth="1.500">
            <path d="M.8.800h22.400v22.400H3L.8 21z" /><path d="M4.500 23v-11h15v11M6.500 23v-9M17.500 23v-9" strokeWidth="1.200" /><path d="M5 1h13v7H5z" fill="#283593" /><path d="M13.500 2.500h2v4h-2z" fill="#fff" stroke="none" />
          </svg>
          <span className="whitespace-nowrap">Save<br />&amp; Exit</span>
        </button>
        <Action label="Record" w="ml-0.5 w-[44px]">
          <svg viewBox="0 0 32 32" className="w-8"><circle cx="16" cy="16" r="15" fill="#fff" stroke="#666" strokeWidth="2" /><circle cx="16" cy="16" r="6" fill="#0072c6" /></svg>
        </Action>
        <span className="mx-[7px]" />
        <button className="flex w-[56px] shrink-0 flex-col items-center">
          <span className="flex h-[34px] items-center">
            <svg viewBox="0 0 33 32" className="w-[33px]">
              <circle cx="16" cy="16" r="15" fill="#2f5c9e" />
              <path d="M5 10l4-4 4-1 1 3-3 3 1 2-3 1-2 3-3-1zM12 14l4-1 5 2 1-3-2-3 3-3 4 1 3 5 1 5-4 1-2 5-4 3-1-5-4-1-3-3zM14 21l4 2-1 4-3 3-2-5z" fill="#fff" />
              <path d="M21 15v14l3.500-3 2.500 5 2.500-1-2.500-5h4.500z" fill="#fff" stroke="#7a7a7a" strokeWidth="1.200" />
            </svg>
          </span>
          <span className="mt-1 leading-[13px]">Open<br />Browser <Caret className="inline w-1.5" /></span>
        </button>
        <Action label="Click" menu w="w-[38px]">
          <svg viewBox="0 0 30 32" className="w-[30px]" fill="none" stroke="#707070" strokeWidth="1.800">
            <path d="M22 8 1.500 18l4.500 3-5.500 5.500 4 4L10 25l3.500 5z" strokeLinejoin="round" />
            <path d="M19 1v6M13 3l3 5M28 3l-4 4M23 11h6M23 13.500l4 4" />
          </svg>
        </Action>
        <Action label="Type" menu w="w-[38px]">
          <svg viewBox="0 0 32 32" className="w-8" fill="none" stroke="#707070" strokeWidth="2">
            <path d="M1 1h30v30H1z" /><path d="M6 12V9h11v3M11.500 9v14M9 23.500h5M19 8h7M19 24h7M22.500 8v16" />
          </svg>
        </Action>
        <Action label="Copy" menu w="w-[38px]">
          <svg viewBox="0 0 26 32" className="w-[26px]" fill="none">
            <path d="M1 1h19l5 6v24H1z" stroke="#666" strokeWidth="2" /><path d="M19 1v6h6" fill="#666" />
            <path d="m9 26 5.500-14h1L21 26M11 21.500h8" stroke="#74b9e3" strokeWidth="3" />
          </svg>
        </Action>
        <Action label="Element" menu w="w-[54px]">
          <svg viewBox="0 0 24 20" className="-mt-2 w-6" fill="none">
            <path d="M.800.800h22.400v18.400H.800z" fill="#fff" stroke="#0f7ab8" strokeWidth="1.600" /><path d="M0 0h24v5H0z" fill="#0f7ab8" />
            <path d="M14 2.500h2M17 2.500h2" stroke="#fff" strokeWidth="1.500" /><path d="M20 2.500h2" stroke="#e53935" strokeWidth="1.500" />
            <path d="M7 7h3.500v3.500H7zM13.500 7H17v3.500h-3.500zM7 13.500h3.500V17H7zM13.500 13.500H17V17h-3.500z" stroke="#666" strokeWidth="1.200" />
          </svg>
        </Action>
        <Action label="Text" menu w="w-[34px]">
          <svg viewBox="0 0 24 24" className="-mt-1 w-6" fill="none" stroke="#777" strokeWidth="1.300">
            <path d="M13 22.500H4A2.500 2.500 0 0 1 1.500 20V3.500A2.500 2.500 0 0 1 4 1h14a2.500 2.500 0 0 1 2.500 2.500V10M17.500 7.500l3 3 3-3" />
            <path d="M7 9V7h8v2M11 7v9.500M9 16.500h4" strokeWidth="1.700" />
          </svg>
        </Action>
        <Action label="Image" menu w="w-[45px]">
          <svg viewBox="0 0 24 18" className="-mt-2.5 w-6">
            <path d="M.8.800h22.400v16.400H.800z" fill="#fff" stroke="#757575" strokeWidth="1.600" /><circle cx="7" cy="6" r="2" fill="#f2d16b" /><path d="M3 15l4-3.500 2.500 1.500L13.500 7l3 4 1.500-1.500 3 5.500z" fill="#5a8fd0" />
          </svg>
        </Action>
        <span className="ml-1.5" />
      </div>
    </section>
  );
}

export default function App() {
  return (
    <div className="relative flex h-screen flex-col overflow-hidden bg-white px-2 pt-2 font-['Roboto',sans-serif]">
      <div className={`shrink-0 ${UI}`}>
        <TabStrip />
        <AddressBar />
        <Bookmarks />
      </div>
      <div className="shrink-0"><DocHeader /></div>
      <div className="flex min-h-0 grow">
        <main className="flex min-w-0 grow flex-col">
          <Toolbar />
          <FormulaBar />
          <Sheet />
          <SheetTabs />
        </main>
        <SidePanel />
      </div>
      <footer className="flex h-2 shrink-0 overflow-hidden bg-linear-to-r from-[#e8eba5] to-[#e3ecab]">
        <div className="ml-12 w-[344px] border border-b-0 border-[#bbb] bg-white" />
        <div className="ml-[149px] w-[45px] border-r border-[#c5c79a] bg-[#f4f6dc]" />
        <span className="mt-1 ml-auto text-[11px] leading-3 font-medium text-[#222]">6:33 PM</span>
        <span className="mr-1 ml-[59px] border-r border-[#b5b98a]" />
      </footer>
      <Recorder />
    </div>
  );
}
